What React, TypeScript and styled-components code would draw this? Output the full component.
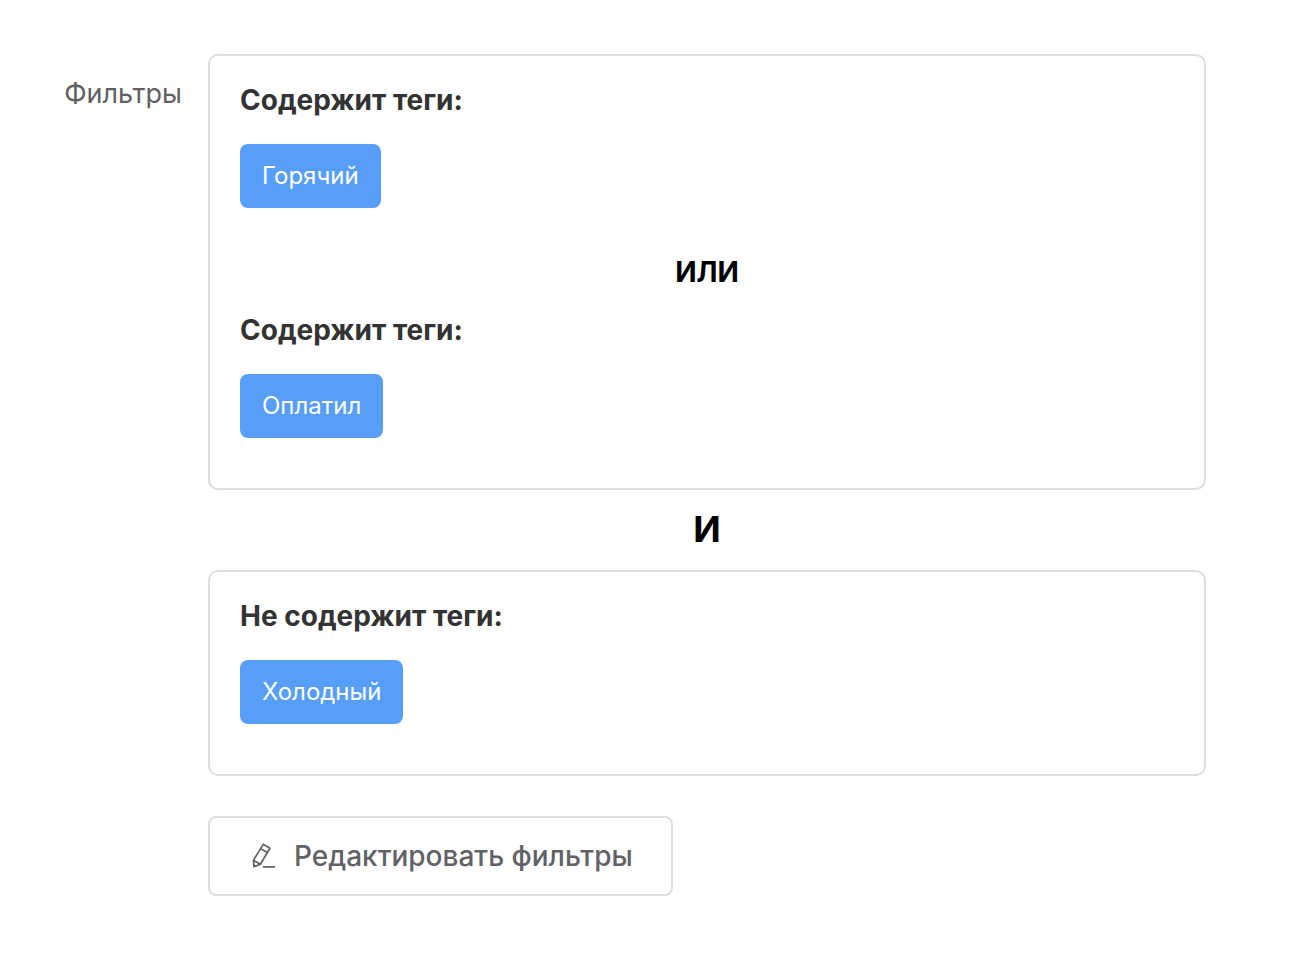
import React from 'react';
import styled, { createGlobalStyle } from 'styled-components';

const GlobalStyle = createGlobalStyle`
  *, *::before, *::after { box-sizing: border-box; }
  body {
    margin: 0;
    background: #fff;
    color: #333;
    font-family: Inter, "Liberation Sans", sans-serif;
  }
`;

const FormItem = styled.main`
  display: grid;
  grid-template-columns: 182px minmax(0, 1fr);
  column-gap: 26px;
  padding: 54px 98px 58px 0;
`;

const Label = styled.h1`
  margin: 0;
  font-size: 27px;
  font-weight: 400;
  line-height: 80px;
  text-align: right;
  color: #606062;
`;

const Groups = styled.div`
  display: flex;
  flex-direction: column;
`;

const Group = styled.section`
  padding: 24px 30px 50px;
  border: 2px solid #dddee2;
  border-radius: 10px;
`;

const GroupTitle = styled.h2`
  margin: 0 0 24px;
  font-size: 28px;
  font-weight: 700;
  line-height: 40px;
`;

const Tag = styled.span`
  display: block;
  width: fit-content;
  padding: 0 22px;
  border-radius: 8px;
  background: #579ef8;
  color: #fff;
  font-size: 24px;
  line-height: 64px;
`;

const Operator = styled.div<{ $outer?: boolean }>`
  padding: ${({ $outer }) => ($outer ? '0' : '44px 0 18px')};
  font-size: ${({ $outer }) => ($outer ? '36px' : '28px')};
  line-height: ${({ $outer }) => ($outer ? '78px' : '40px')};
  min-height: ${({ $outer }) => ($outer ? '80px' : '0')};
  font-weight: 700;
  text-align: center;
  color: #000;
`;

const EditButton = styled.button`
  display: flex;
  align-items: center;
  align-self: flex-start;
  gap: 16px;
  height: 80px;
  margin-top: 40px;
  padding: 0 38px 0 40px;
  border: 2px solid #dddee2;
  border-radius: 8px;
  background: #fff;
  color: #606266;
  font: 500 28px Inter, "Liberation Sans", sans-serif;
  cursor: pointer;
`;

const PencilIcon = () => (
  <svg width="28" height="28" viewBox="0 0 28 28" fill="none" stroke="currentColor" strokeWidth="1.7" aria-hidden="true">
    <path d="M13.2 2.3 L19.9 6.2 L10.4 22.2 L4 24.6 L3.4 18.4 Z" />
    <path d="M10.6 6.7 L17.3 10.6 M3.4 18.4 L10.4 22.2 M13 24.9 H25" />
    <path d="M3.6 22.4 L6.4 23.9 L4 25 Z" fill="currentColor" strokeWidth="0.6" />
  </svg>
);

const Condition = ({ title, tag }: { title: string; tag: string }) => (
  <>
    <GroupTitle>{title}</GroupTitle>
    <Tag>{tag}</Tag>
  </>
);

export default function App() {
  return (
    <>
      <GlobalStyle />
      <FormItem>
        <Label>Фильтры</Label>
        <Groups>
          <Group>
            <Condition title="Содержит теги:" tag="Горячий" />
            <Operator>ИЛИ</Operator>
            <Condition title="Содержит теги:" tag="Оплатил" />
          </Group>
          <Operator $outer>И</Operator>
          <Group>
            <Condition title="Не содержит теги:" tag="Холодный" />
          </Group>
          <EditButton type="button">
            <PencilIcon />
            Редактировать фильтры
          </EditButton>
        </Groups>
      </FormItem>
    </>
  );
}
